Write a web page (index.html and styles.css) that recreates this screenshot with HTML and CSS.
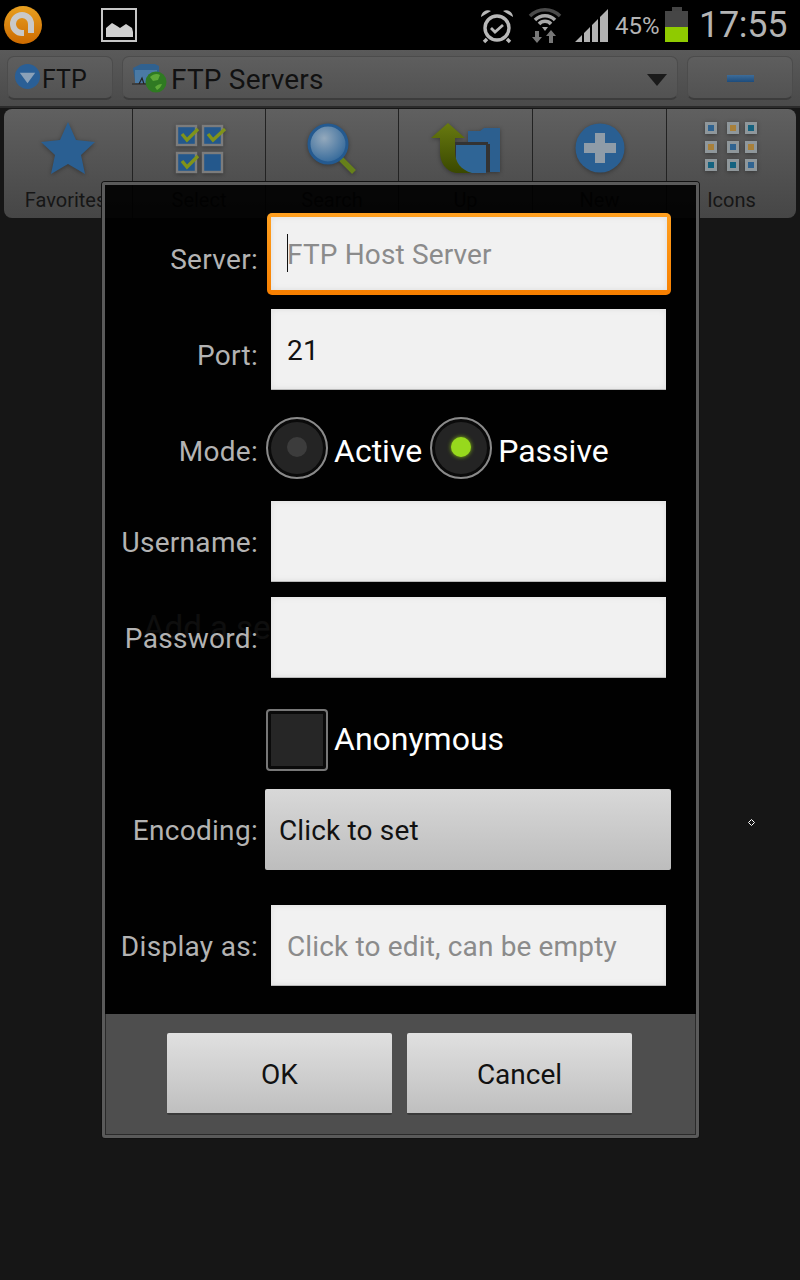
FILE: index.html
```html
<!DOCTYPE html>
<html lang="en">
<head>
<meta charset="utf-8">
<title>FTP Servers</title>
<link rel="stylesheet" href="styles.css">
</head>
<body>
<div class="screen">
  <header class="statusbar">
    <div class="status-left">
      <svg class="ic-app" viewBox="0 0 38 38"><defs><linearGradient id="og" x1="0" y1="0" x2="0" y2="1"><stop offset="0" stop-color="#e8a020"/><stop offset="1" stop-color="#cc6a00"/></linearGradient></defs><circle cx="19" cy="19" r="19" fill="url(#og)"/><path d="M27 27V18a9 9 0 1 0-9 9h2" fill="none" stroke="#c9c9c9" stroke-width="6"/></svg>
      <svg class="ic-pic" viewBox="0 0 36 34"><rect x="1" y="1" width="34" height="32" fill="#000" stroke="#c6c6c6" stroke-width="2"/><path d="M5 29V20l6-5 5 3 3 2 6-4 6 4 1 4v5z" fill="#cfcfcf"/></svg>
    </div>
    <div class="status-right">
      <svg class="ic-alarm" viewBox="0 0 34 36"><g fill="none" stroke="#b8b8b8"><circle cx="17" cy="20" r="12" stroke-width="3.4"/><path d="M11 20l4 4 8-7" stroke-width="2.8"/><path d="M7 31l-3 3M27 31l3 3" stroke-width="3.4"/></g><path d="M1 9a7 7 0 0 1 10-6zM33 9a7 7 0 0 0-10-6z" fill="#b8b8b8"/></svg>
      <svg class="ic-wifi" viewBox="0 0 34 36"><g fill="none" stroke-width="3.5"><path d="M2 9a21 21 0 0 1 30 0" stroke="#4a4a4a"/><path d="M7 13a14 14 0 0 1 20 0" stroke="#a8a8a8"/><path d="M11 17a8 8 0 0 1 12 0" stroke="#a8a8a8"/></g><path d="M14 20h6l-3 4z" fill="#a8a8a8"/><path d="M9 36l-5-6h3v-6h4v6h3zM21 36v-7h-3l5-6 5 6h-3v7z" fill="#777"/></svg>
      <svg class="ic-signal" viewBox="0 0 33 33"><path d="M0 33L7 26V33zM9 24L15 18V33H9zM17 16L23 10V33H17zM25 8L33 0V33H25z" fill="#b2b2b2"/></svg>
      <span class="st-pct">45%</span>
      <div class="battery"><div class="bat-cap"></div><div class="bat-empty"></div><div class="bat-full"></div></div>
      <span class="st-time">17:55</span>
    </div>
  </header>

  <section class="addressbar">
    <div class="btn btn-ftp">
      <svg class="ic-drop" viewBox="0 0 28 28"><circle cx="14" cy="14" r="13" fill="#2a5f96"/><path d="M6 10h16l-8 11z" fill="#8ba1b8"/></svg>
      <span>FTP</span>
    </div>
    <div class="btn btn-spinner">
      <svg class="ic-servers" viewBox="0 0 36 30"><path d="M2 5l8-4h14l4 2v15H4z" fill="#30618f"/><path d="M4 7h22v13H4z" fill="#4a7aa5"/><path d="M1 21h14M8 21l3-6 2 6" stroke="#222" stroke-width="1.2" fill="none"/><circle cx="25" cy="19" r="10.5" fill="#2f7a22"/><path d="M19 14c3-3 7-4 10-2l-2 5-5 1zM24 24c2-2 4-3 7-3-1 3-3 5-5 6z" fill="#5da838"/></svg>
      <span class="spinner-label">FTP Servers</span>
      <svg class="ic-caret" viewBox="0 0 20 12"><path d="M0 0h20L10 12z" fill="#1a1a1a"/></svg>
    </div>
    <div class="btn btn-minus"><span class="minus"></span></div>
  </section>

  <nav class="toolbar">
    <div class="tool">
      <svg class="tool-ic" viewBox="0 0 56 54"><path d="M28 0l8 18 19 2-14 13 4 19-17-10-17 10 4-19L1 20l19-2z" fill="#2a5f92"/></svg>
      <span class="tool-label tool-label-first">Favorites</span>
    </div>
    <div class="tool">
      <svg class="tool-ic" viewBox="0 0 56 54"><g fill="#24588c" stroke="#7c7c7c" stroke-width="2.4"><rect x="6" y="4" width="19" height="19"/><rect x="32" y="4" width="19" height="19"/><rect x="6" y="31" width="19" height="19"/><rect x="32" y="31" width="19" height="19"/></g><g fill="none" stroke="#80931a" stroke-width="3.4"><path d="M11 12l5 6 11-11M37 12l5 6 12-11M11 39l5 6 11-11"/></g></svg>
      <span class="tool-label">Select</span>
    </div>
    <div class="tool">
      <svg class="tool-ic" viewBox="0 0 56 54"><defs><radialGradient id="lens" cx=".4" cy=".35" r=".7"><stop offset="0" stop-color="#94a9bc"/><stop offset="1" stop-color="#2f6699"/></radialGradient></defs><path d="M37 37l13 13" stroke="#66801a" stroke-width="5.5"/><circle cx="24" cy="22" r="19" fill="url(#lens)" stroke="#245a90" stroke-width="3"/></svg>
      <span class="tool-label">Search</span>
    </div>
    <div class="tool">
      <svg class="tool-ic tool-ic-up" viewBox="0 0 72 54"><defs><linearGradient id="upg" x1="0" y1="0" x2="0" y2="1"><stop offset="0" stop-color="#687a10"/><stop offset="1" stop-color="#3a4800"/></linearGradient></defs><path d="M38 9l12 0 4-3h16v44H38z" fill="#2c5f8f"/><path d="M24 20h34v2h2v28H32c-6 0-8-4-8-8z" fill="#333"/><path d="M26 23h30v28H34c-5 0-8-4-8-8z" fill="#2f6596"/><path d="M1 16L18 1l17 15H25v14c0 10 6 18 17 21H26C15 49 10 40 10 30V16z" fill="url(#upg)"/></svg>
      <span class="tool-label">Up</span>
    </div>
    <div class="tool">
      <svg class="tool-ic" viewBox="0 0 56 54"><circle cx="28" cy="26" r="24.5" fill="#2a5f92"/><path d="M23 11h10v10h11v10H33v10H23V31H12V21h11z" fill="#8f9ca8"/></svg>
      <span class="tool-label">New</span>
    </div>
    <div class="tool">
      <svg class="tool-ic" viewBox="0 0 56 54"><g fill="#8f979b"><rect x="1" y="0" width="12" height="12"/><rect x="23" y="0" width="12" height="12"/><rect x="41" y="0" width="12" height="12"/><rect x="1" y="19" width="12" height="12"/><rect x="23" y="19" width="12" height="12"/><rect x="41" y="19" width="12" height="12"/><rect x="1" y="37" width="12" height="12"/><rect x="23" y="37" width="12" height="12"/><rect x="41" y="37" width="12" height="12"/></g><g fill="#2f6390"><rect x="4" y="3" width="6" height="6"/><rect x="44" y="3" width="6" height="6" fill="#14627f"/><rect x="26" y="22" width="6" height="6"/><rect x="4" y="40" width="6" height="6" fill="#14627f"/><rect x="26" y="40" width="6" height="6" fill="#14627f"/><rect x="44" y="40" width="6" height="6"/></g><g fill="#a8803a"><rect x="26" y="3" width="6" height="6"/><rect x="4" y="22" width="6" height="6"/><rect x="44" y="22" width="6" height="6"/></g></svg>
      <span class="tool-label">Icons</span>
    </div>
  </nav>

  <p class="empty-msg">Add a server</p>

  <div class="dialog">
    <div class="form">
      <div class="row row-server">
        <label class="lbl lbl-server">Server:</label>
        <div class="focus-ring"><div class="field field-focus"><i class="cursor"></i><span class="hint">FTP Host Server</span></div></div>
      </div>
      <div class="row row-port">
        <label class="lbl lbl-low">Port:</label>
        <div class="field"><span class="value">21</span></div>
      </div>
      <div class="row row-mode">
        <label class="lbl lbl-low-s">Mode:</label>
        <div class="choices">
          <span class="radio"><span class="dot"></span></span><span class="choice-text">Active</span>
          <span class="radio radio-2"><span class="dot dot-on"></span></span><span class="choice-text">Passive</span>
        </div>
      </div>
      <div class="row row-user">
        <label class="lbl">Username:</label>
        <div class="field"></div>
      </div>
      <div class="row row-pass">
        <label class="lbl">Password:</label>
        <div class="field"></div>
      </div>
      <div class="row row-anon">
        <span class="lbl"></span>
        <div class="choices">
          <span class="check"></span><span class="choice-text">Anonymous</span>
        </div>
      </div>
      <div class="row row-enc">
        <label class="lbl">Encoding:</label>
        <div class="select-btn">Click to set</div>
      </div>
      <div class="row row-disp">
        <label class="lbl">Display as:</label>
        <div class="field"><span class="hint">Click to edit, can be empty</span></div>
      </div>
    </div>
    <footer class="dialog-foot">
      <div class="dlg-btn">OK</div>
      <div class="dlg-btn">Cancel</div>
    </footer>
  </div>

  <svg class="pointer" viewBox="0 0 7 7"><path d="M3.5.5l3 3-3 3-3-3z" fill="#161616" stroke="#fff" stroke-width="1"/></svg>
</div>
</body>
</html>
```

FILE: styles.css
```css
* { box-sizing: border-box; }
html, body { margin: 0; padding: 0; }
body { background: #161616; font-family: Roboto, "Liberation Sans", sans-serif; }
.screen { position: relative; width: 800px; height: 1280px; overflow: hidden; background: #161616; }
svg { display: block; flex: none; }

.statusbar { height: 50px; background: #000; display: flex; justify-content: space-between; }
.status-left { display: flex; align-items: flex-start; padding: 6px 0 0 4px; }
.ic-app { width: 38px; height: 38px; }
.ic-pic { width: 36px; height: 34px; margin: 2px 0 0 59px; }
.status-right { display: flex; align-items: flex-start; padding-right: 12px; }
.ic-alarm { width: 34px; height: 36px; margin-top: 8px; }
.ic-wifi { width: 34px; height: 36px; margin: 7px 0 0 14px; }
.ic-signal { width: 33px; height: 33px; margin: 9px 0 0 13px; }
.st-pct { font-size: 24px; line-height: 52px; color: #b4b4b4; margin-left: 7px; width: 50px; }
.battery { width: 23px; margin: 7px 0 0 0; display: flex; flex-direction: column; align-items: center; }
.bat-cap { width: 10px; height: 4px; background: #444; }
.bat-empty { width: 23px; height: 16px; background: #464646; }
.bat-full { width: 23px; height: 15px; background: #8fcb00; }
.st-time { width: 89px; font-size: 36px; line-height: 50px; color: #b4b4b4; margin-left: 11px; letter-spacing: -.3px; }

.addressbar { height: 58px; padding: 6px 7px 8px; display: flex; gap: 9px; background: linear-gradient(#5a5a5a, #4a4a4a); border-bottom: 2px solid #2b2b2b; }
.btn { height: 44px; display: flex; align-items: center; padding-top: 4px; border-radius: 7px; border: 1px solid #4c4c4c; border-bottom: 2px solid #3c3c3c; background: linear-gradient(#5e5e5e, #525252); color: #111; font-size: 28px; }
.btn-ftp { width: 106px; padding-left: 6px; font-size: 25px; }
.ic-drop { width: 27px; height: 27px; margin: -7px 1px 0 0; }
.btn-spinner { width: 556px; padding-left: 8px; }
.ic-servers { width: 36px; height: 30px; margin: -4px 4px 0 0; }
.spinner-label { flex: 1; letter-spacing: .2px; }
.ic-caret { width: 20px; height: 12px; margin-right: 10px; }
.btn-minus { width: 106px; justify-content: center; padding-top: 2px; }
.minus { width: 27px; height: 7px; background: linear-gradient(#3d6c99, #1d4c7c); }

.toolbar { position: relative; height: 109px; margin: 1px 4px 0; display: grid; grid-template-columns: 128px 133px 133px 134px 134px 130px; border-radius: 8px; background: linear-gradient(#606060, #464646); }
.tool { display: flex; flex-direction: column; align-items: center; border-left: 1px solid #222; padding-top: 13px; min-width: 0; }
.tool:first-child { border-left: 0; }
.tool-ic { width: 56px; height: 54px; filter: drop-shadow(0 1px 2px rgba(0, 0, 0, .35)); }
.tool-ic-up { width: 72px; }
.tool-label { margin-top: 11px; font-size: 20px; line-height: 26px; color: #161616; }
.tool-label-first { margin-right: 5px; }

.empty-msg { position: absolute; left: 143px; top: 608px; margin: 0; font-size: 33px; line-height: 40px; color: #b0b0b0; }

.dialog { position: absolute; left: 102px; top: 182px; width: 597px; height: 956px; border: 3px solid #5a5a5a; border-radius: 3px; background: rgba(0, 0, 0, .92); display: flex; flex-direction: column; box-shadow: 0 0 0 1px #111; }
.form { flex: 1; padding: 28px 0 0; }
.row { display: flex; align-items: center; }
.row-server { height: 82px; }
.row-port { height: 81px; margin-top: 14px; }
.row-mode { height: 61px; margin-top: 27px; }
.row-user { height: 81px; margin-top: 23px; }
.row-pass { height: 81px; margin-top: 15px; }
.row-anon { height: 61px; margin-top: 31px; }
.row-enc { height: 81px; margin-top: 19px; }
.row-disp { height: 81px; margin-top: 35px; }
.lbl { position: relative; width: 153px; flex: none; padding-top: 2px; text-align: right; font-size: 28px; letter-spacing: .3px; color: #b3b3b3; }
.lbl-low { padding-top: 12px; }
.lbl-server { padding-top: 10px; }
.lbl-low-s { padding-top: 8px; }

.field { width: 395px; height: 81px; margin-left: 13px; display: flex; align-items: center; padding: 3px 16px 0; background: #f1f1f1; box-shadow: inset 0 0 6px #dedede; border-bottom: 1px solid #b9b9b9; }
.focus-ring { width: 404px; height: 82px; margin-left: 9px; border-radius: 5px; padding: 4px 4px 5px; background: linear-gradient(#ffa020, #f77f00); }
.field-focus { width: 396px; height: 73px; margin: 0; border: 0; padding: 2px 16px 0; position: relative; }
.cursor { position: absolute; left: 16px; top: 17px; width: 1px; height: 38px; background: #111; }
.hint { font-size: 28px; color: #8b8b8b; letter-spacing: .15px; white-space: nowrap; }
.value { font-size: 28px; color: #111; letter-spacing: .15px; }

.choices { display: flex; align-items: center; margin-left: 8px; }
.radio { width: 62px; height: 62px; border-radius: 50%; border: 2px solid #8a8a8a; background: #242424; box-shadow: inset 0 0 0 3px #0a0a0a; display: flex; align-items: center; justify-content: center; }
.radio-2 { margin-left: 8px; }
.dot { width: 20px; height: 20px; border-radius: 50%; background: #3c3c3c; margin-top: -1px; }
.dot-on { background: #97d91d; box-shadow: 0 0 4px #8ac013; }
.choice-text { margin-left: 6px; font-size: 32px; color: #fff; padding-top: 6px; }
.check { width: 62px; height: 62px; border-radius: 4px; border: 2px solid #777; background: #262626; box-shadow: inset 0 0 0 3px #0a0a0a; }
.row-anon .choice-text { margin-bottom: 2px; padding-top: 0; }

.select-btn { width: 406px; height: 81px; margin-left: 7px; display: flex; align-items: center; padding: 2px 0 0 14px; font-size: 28px; letter-spacing: .15px; color: #111; background: linear-gradient(#d8d8d8, #bdbdbd); border-radius: 2px; }

.dialog-foot { height: 121px; flex: none; display: flex; justify-content: center; gap: 15px; padding: 19px 2px 0 0; background: #4e4e4e; border: 1px solid #2a2a2a; border-top: 0; }
.dlg-btn { width: 225px; height: 82px; display: flex; align-items: center; justify-content: center; padding-top: 2px; font-size: 28px; color: #111; border-radius: 2px; background: linear-gradient(#e0e0e0, #bfbfbf); border-bottom: 2px solid #3a3a3a; }

.pointer { position: absolute; left: 748px; top: 819px; width: 7px; height: 7px; }
```
